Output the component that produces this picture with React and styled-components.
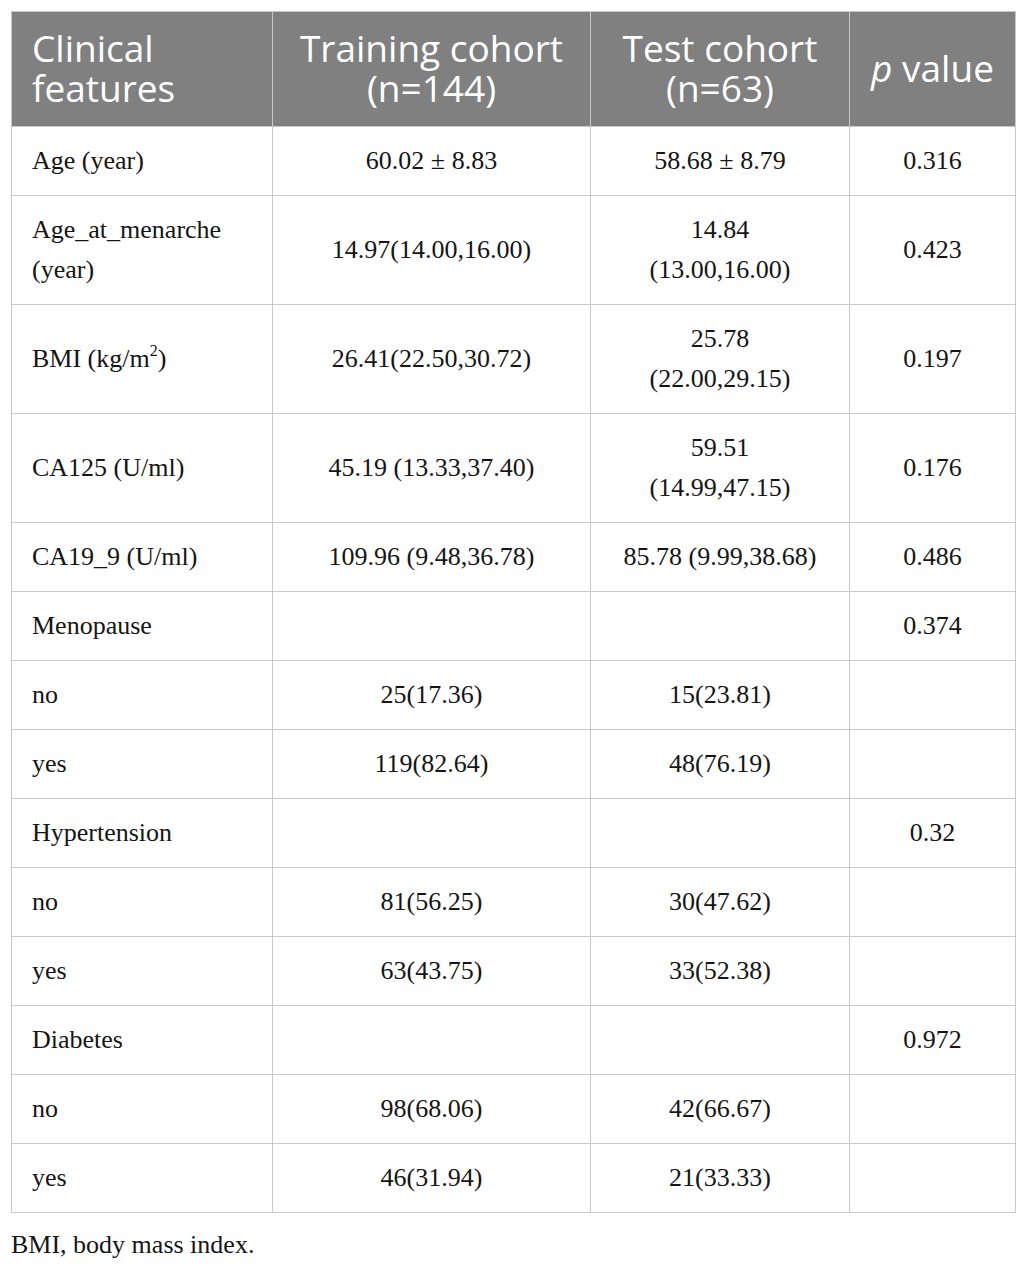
import React from "react";
import styled, { createGlobalStyle } from "styled-components";

const GlobalStyle = createGlobalStyle`
  html, body {
    margin: 0;
    padding: 0;
    background: #ffffff;
  }
`;

const Page = styled.div`
  padding: 11px 11px 0 11px;
  width: 1004px;
`;

const Table = styled.table`
  width: 1004px;
  border-collapse: collapse;
  table-layout: fixed;
  font-family: "Liberation Serif", "Times New Roman", serif;
  font-size: 26px;
  color: #151515;
`;

const HeadCell = styled.th`
  background: #808080;
  color: #ffffff;
  font-family: "Open Sans", "Lato", sans-serif;
  font-weight: 400;
  font-size: 37px;
  line-height: 40px;
  padding: 16px 20px 18px 20px;
  border: 1px solid #c9c9c9;
  text-align: ${(p) => (p.$left ? "left" : "center")};
  vertical-align: middle;
  white-space: nowrap;

  i {
    font-style: italic;
  }
`;

const Cell = styled.td`
  border: 1px solid #c9c9c9;
  padding: 14px 20px;
  line-height: 40px;
  text-align: ${(p) => (p.$left ? "left" : "center")};
  vertical-align: middle;
  white-space: nowrap;

  sup {
    font-size: 16px;
    line-height: 0;
    vertical-align: 11px;
  }
`;

const Note = styled.p`
  margin: 17px 0 0 0;
  font-family: "Liberation Serif", "Times New Roman", serif;
  font-size: 26px;
  color: #151515;
`;

const rows = [
  ["Age (year)", "60.02 ± 8.83", "58.68 ± 8.79", "0.316"],
  [<>Age_at_menarche<br />(year)</>, "14.97(14.00,16.00)", <>14.84<br />(13.00,16.00)</>, "0.423"],
  [<>BMI (kg/m<sup>2</sup>)</>, "26.41(22.50,30.72)", <>25.78<br />(22.00,29.15)</>, "0.197"],
  ["CA125 (U/ml)", "45.19 (13.33,37.40)", <>59.51<br />(14.99,47.15)</>, "0.176"],
  ["CA19_9 (U/ml)", "109.96 (9.48,36.78)", "85.78 (9.99,38.68)", "0.486"],
  ["Menopause", "", "", "0.374"],
  ["no", "25(17.36)", "15(23.81)", ""],
  ["yes", "119(82.64)", "48(76.19)", ""],
  ["Hypertension", "", "", "0.32"],
  ["no", "81(56.25)", "30(47.62)", ""],
  ["yes", "63(43.75)", "33(52.38)", ""],
  ["Diabetes", "", "", "0.972"],
  ["no", "98(68.06)", "42(66.67)", ""],
  ["yes", "46(31.94)", "21(33.33)", ""],
];

export default function App() {
  return (
    <Page>
      <GlobalStyle />
      <Table>
        <colgroup>
          <col style={{ width: 261 }} />
          <col style={{ width: 318 }} />
          <col style={{ width: 259 }} />
          <col style={{ width: 166 }} />
        </colgroup>
        <thead>
          <tr>
            <HeadCell $left>Clinical<br />features</HeadCell>
            <HeadCell>Training cohort<br />(n=144)</HeadCell>
            <HeadCell>Test cohort<br />(n=63)</HeadCell>
            <HeadCell><i>p</i> value</HeadCell>
          </tr>
        </thead>
        <tbody>
          {rows.map((r, i) => (
            <tr key={i}>
              <Cell $left>{r[0]}</Cell>
              <Cell>{r[1]}</Cell>
              <Cell>{r[2]}</Cell>
              <Cell>{r[3]}</Cell>
            </tr>
          ))}
        </tbody>
      </Table>
      <Note>BMI, body mass index.</Note>
    </Page>
  );
}
